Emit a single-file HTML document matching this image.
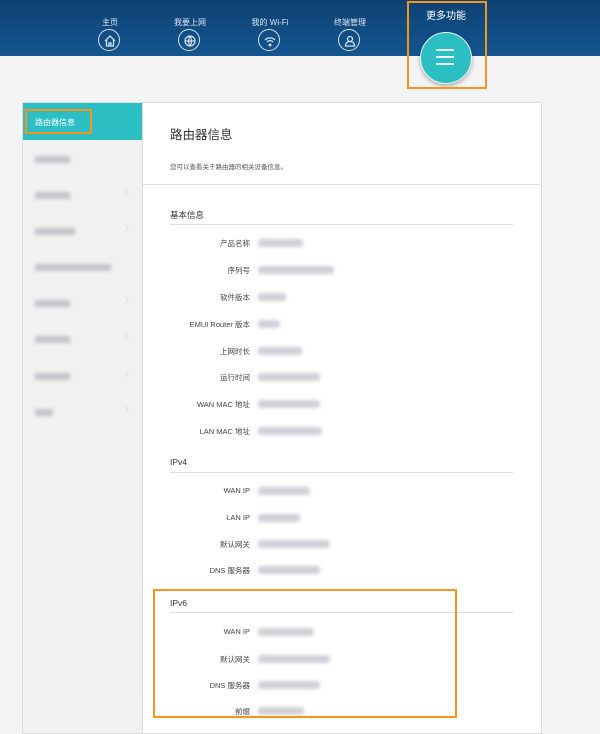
<!DOCTYPE html><html><head><meta charset="utf-8"><style>
body{margin:0;width:600px;height:722px;background:#f4f4f4;position:relative;overflow:hidden;font-family:"Liberation Sans","Noto Sans CJK SC",sans-serif;}
.a{position:absolute}
.hdr{left:0;top:0;width:600px;height:56px;background:linear-gradient(#0d4174,#14568f);}
.nav{color:#dfe8f2;font-size:8px;text-align:center;width:60px}
.ic{width:20px;height:20px;border:1.5px solid #d5e2ee;border-radius:50%;}
.lab{font-size:7.5px;color:#444;text-align:right;width:120px;left:130px}
.val{height:8px;background:#d0d0d6;filter:blur(1.8px);left:258px;border-radius:3px}
.sec{left:170px;font-size:8.5px;color:#333}
.ln{left:170px;width:343px;height:1px;background:#ddd}
.sb{left:35px;height:7px;background:#c4c4c9;filter:blur(1.8px)}
.ch{left:123px;width:4px;height:4px;border-right:1px solid #e0e0e0;border-bottom:1px solid #e0e0e0;transform:rotate(-45deg)}
.ob{border:2px solid #f7941d}
</style></head><body>
<div class="a hdr"></div>
<div class="a nav" style="left:80px;top:17px">主页</div>
<div class="a nav" style="left:160px;top:17px">我要上网</div>
<div class="a nav" style="left:240px;top:17px">我的 Wi-Fi</div>
<div class="a nav" style="left:320px;top:17px">终端管理</div>
<div class="a ic" style="left:98px;top:29px"></div>
<div class="a ic" style="left:178px;top:29px"></div>
<div class="a ic" style="left:258px;top:29px"></div>
<div class="a ic" style="left:338px;top:29px"></div>
<svg class="a" style="left:98px;top:29px" width="24" height="24" viewBox="0 0 24 24" fill="none" stroke="#d5e2ee" stroke-width="1.3"><path d="M7 12l5-5 5 5M8.5 11v6h7v-6M11 17v-3h2v3"/></svg>
<svg class="a" style="left:178px;top:29px" width="24" height="24" viewBox="0 0 24 24" fill="none" stroke="#d5e2ee" stroke-width="1.2"><circle cx="12" cy="12" r="5"/><path d="M7 12h10M12 7c-2 3-2 7 0 10M12 7c2 3 2 7 0 10"/></svg>
<svg class="a" style="left:258px;top:29px" width="24" height="24" viewBox="0 0 24 24" fill="none" stroke="#d5e2ee" stroke-width="1.3"><path d="M7 11a7 7 0 0 1 10 0M9 13a4 4 0 0 1 6 0"/><circle cx="12" cy="16" r=".8" fill="#d5e2ee"/></svg>
<svg class="a" style="left:338px;top:29px" width="24" height="24" viewBox="0 0 24 24" fill="none" stroke="#d5e2ee" stroke-width="1.3"><circle cx="12" cy="10" r="2.5"/><path d="M7.5 17c0-3 2-4.5 4.5-4.5s4.5 1.5 4.5 4.5z"/></svg>
<div class="a" style="left:420px;top:7px;width:52px;text-align:center;color:#fff;font-size:10px">更多功能</div>
<div class="a" style="left:420px;top:32px;width:50px;height:50px;border-radius:50%;background:#2bbfc4;box-shadow:0 2px 5px rgba(0,0,0,.3);border:1px solid #e8f4f4"></div>
<div class="a" style="left:436px;top:49px;width:18px;height:2px;background:#e6fafa;box-shadow:0 7px 0 #e6fafa,0 14px 0 #e6fafa"></div>
<div class="a ob" style="left:407px;top:1px;width:76px;height:84px"></div>

<div class="a" style="left:22px;top:102px;width:518px;height:630px;background:#fff;border:1px solid #ddd"></div>
<div class="a" style="left:23px;top:103px;width:119px;height:630px;background:#f1f1f1;border-right:1px solid #ddd"></div>
<div class="a" style="left:23px;top:103px;width:119px;height:37px;background:#2bbfc4"></div>
<div class="a" style="left:35px;top:117px;color:#fff;font-size:8px">路由器信息</div>
<div class="a ob" style="left:25px;top:109px;width:63px;height:21px"></div>
<div class="a sb" style="top:156px;width:35px"></div>
<div class="a sb" style="top:192px;width:35px"></div><div class="a ch" style="top:190px"></div>
<div class="a sb" style="top:228px;width:40px"></div><div class="a ch" style="top:226px"></div>
<div class="a sb" style="top:264px;width:76px"></div>
<div class="a sb" style="top:300px;width:35px"></div><div class="a ch" style="top:298px"></div>
<div class="a sb" style="top:336px;width:35px"></div><div class="a ch" style="top:334px"></div>
<div class="a sb" style="top:373px;width:35px"></div><div class="a ch" style="top:371px"></div>
<div class="a sb" style="top:409px;width:18px"></div><div class="a ch" style="top:407px"></div>

<div class="a" style="left:170px;top:124px;font-size:12.5px;color:#333">路由器信息</div>
<div class="a" style="left:170px;top:161px;font-size:6.5px;color:#555">您可以查看关于路由器的相关设备信息。</div>
<div class="a" style="left:143px;top:184px;width:397px;height:1px;background:#ddd"></div>
<div class="a sec" style="top:209px">基本信息</div><div class="a ln" style="top:224px"></div>
<div class="a lab" style="top:238px">产品名称</div><div class="a val" style="top:239px;width:45px"></div>
<div class="a lab" style="top:265px">序列号</div><div class="a val" style="top:266px;width:76px"></div>
<div class="a lab" style="top:292px">软件版本</div><div class="a val" style="top:293px;width:28px"></div>
<div class="a lab" style="top:319px">EMUI Router 版本</div><div class="a val" style="top:320px;width:22px"></div>
<div class="a lab" style="top:346px">上网时长</div><div class="a val" style="top:347px;width:44px"></div>
<div class="a lab" style="top:372px">运行时间</div><div class="a val" style="top:373px;width:62px"></div>
<div class="a lab" style="top:399px">WAN MAC 地址</div><div class="a val" style="top:400px;width:62px"></div>
<div class="a lab" style="top:426px">LAN MAC 地址</div><div class="a val" style="top:427px;width:64px"></div>
<div class="a sec" style="top:457px">IPv4</div><div class="a ln" style="top:472px"></div>
<div class="a lab" style="top:486px">WAN IP</div><div class="a val" style="top:487px;width:52px"></div>
<div class="a lab" style="top:513px">LAN IP</div><div class="a val" style="top:514px;width:42px"></div>
<div class="a lab" style="top:539px">默认网关</div><div class="a val" style="top:540px;width:72px"></div>
<div class="a lab" style="top:565px">DNS 服务器</div><div class="a val" style="top:566px;width:62px"></div>
<div class="a sec" style="top:598px">IPv6</div><div class="a ln" style="top:612px"></div>
<div class="a lab" style="top:627px">WAN IP</div><div class="a val" style="top:628px;width:56px"></div>
<div class="a lab" style="top:654px">默认网关</div><div class="a val" style="top:655px;width:72px"></div>
<div class="a lab" style="top:680px">DNS 服务器</div><div class="a val" style="top:681px;width:62px"></div>
<div class="a lab" style="top:706px">前缀</div><div class="a val" style="top:707px;width:46px"></div>
<div class="a ob" style="left:153px;top:589px;width:300px;height:125px"></div>
</body></html>
